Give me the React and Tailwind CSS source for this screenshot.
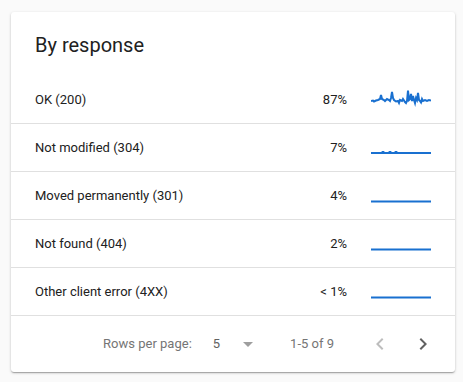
import React from 'react';

const okPoints =
  '0,11 2,10.5 3,11.5 5,10.5 7,10 9,9 10,5 11,9 13,10 14,11 16,9 18,10 19,11 20,8 21,2 22,8 23,10 25,11.5 27,11 28,13 29,10 31,11 32,9 34,12 35,13 36,11 37,0.5 38,10 39,9 40,4 41,11 42,6 43,10 44,13 45,8 46,10 47,3 48,10 49,11 50,12.5 51,9 52,11 54,10 56,11 58,10 60,10.5';

const rows = [
  { label: 'OK (200)', pct: '87%', points: okPoints },
  { label: 'Not modified (304)', pct: '7%', points: '0,15 11,15 11.5,14 12.5,14 13,15 18,15 18.5,14 19.5,14 20,15 24,15 24.5,14 25.5,14 26,15 60,15' },
  { label: 'Moved permanently (301)', pct: '4%', points: '0,15.5 60,15.5' },
  { label: 'Not found (404)', pct: '2%', points: '0,15.5 60,15.5' },
  { label: 'Other client error (4XX)', pct: '< 1%', points: '0,15.5 60,15.5' },
];

function Spark({ points }) {
  return (
    <svg width="60" height="20" viewBox="0 0 60 20" className="block">
      <polyline points={points} fill="none" stroke="#1970d0" strokeWidth="2" strokeLinejoin="miter" />
    </svg>
  );
}

export default function App() {
  return (
    <div className="min-h-[382px] bg-[#fafafa] pt-3 pl-[11px]" style={{ fontFamily: 'Roboto, "Liberation Sans", sans-serif' }}>
      <div className="w-[444px] bg-white rounded-[3px] shadow-[0_1px_3px_rgba(0,0,0,0.2),0_1px_1px_rgba(0,0,0,0.14),0_2px_1px_-1px_rgba(0,0,0,0.12)]">
        {/* Header */}
        <div className="px-6 pt-[19px] pb-[17px]">
          <h2 className="text-[20px] leading-7 text-[#212121]">By response</h2>
        </div>

        {/* Rows */}
        <div>
          {rows.map((r) => (
            <div key={r.label} className="h-12 flex items-center pl-6 pr-6 border-b border-[#e0e0e0] text-[13px] text-[#212121]">
              <span className="flex-1">{r.label}</span>
              <span className="mr-6">{r.pct}</span>
              <Spark points={r.points} />
            </div>
          ))}
        </div>

        {/* Footer */}
        <div className="h-14 flex items-center justify-end pr-5 text-[13px] text-[#757575]">
          <span>Rows per page:</span>
          <span className="ml-[21px] text-[#616161]">5</span>
          <svg width="24" height="24" viewBox="0 0 24 24" className="ml-4">
            <path d="M7 10l5 5 5-5z" fill="#9e9e9e" />
          </svg>
          <span className="ml-[30px]">1-5 of 9</span>
          <svg width="24" height="24" viewBox="0 0 24 24" className="ml-[34px]">
            <path d="M15.41 7.41L14 6l-6 6 6 6 1.41-1.41L10.83 12z" fill="#bdbdbd" />
          </svg>
          <svg width="24" height="24" viewBox="0 0 24 24" className="ml-[19px]">
            <path d="M10 6L8.59 7.41 13.17 12l-4.58 4.59L10 18l6-6z" fill="#616161" />
          </svg>
        </div>
      </div>
    </div>
  );
}
